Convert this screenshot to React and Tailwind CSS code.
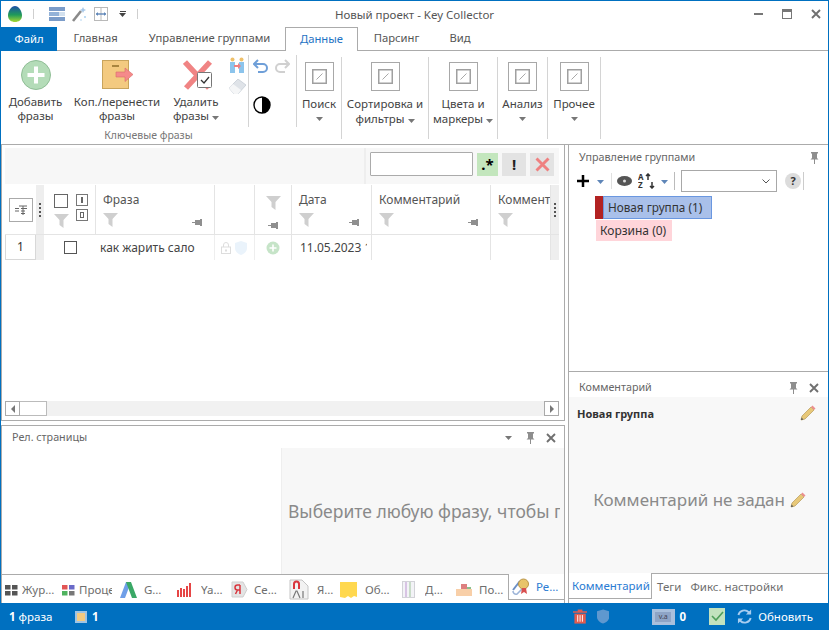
import React from "react";

const Pin = ({ className = "" }) => (
  <svg width="11" height="9" viewBox="0 0 11 9" className={className}>
    <path d="M0 4h3v1H0zM3 2h5v5H3zM8 1h2v7H8z" fill="#8f8f8f" />
  </svg>
);

const PinV = () => (
  <svg width="9" height="12" viewBox="0 0 9 12">
    <path d="M1 0h7v1.500H7V6l1.500 1.500H5V12H4V7.500H.5L2 6V1.500H1z" fill="#8e8e8e" />
  </svg>
);

const CloseX = ({ size = 10, color = "#707070" }) => (
  <svg width={size} height={size} viewBox="0 0 10 10">
    <path d="M1 1l8 8M9 1l-8 8" stroke={color} strokeWidth="1.900" />
  </svg>
);

const Funnel = ({ className = "" }) => (
  <svg width="15" height="14" viewBox="0 0 15 14" className={className}>
    <path d="M0 0h15L9.500 6v8l-4-3V6z" fill="#cfcfcf" />
  </svg>
);

const Caret = ({ color = "#777" }) => (
  <svg width="7" height="4" viewBox="0 0 7 4" className="inline-block">
    <path d="M0 0h7L3.500 4z" fill={color} />
  </svg>
);

const Pencil = () => (
  <svg width="16" height="16" viewBox="0 0 16 16">
    <path d="M1 15l1-4L11 2l3 3-9 9z" fill="#e8c878" stroke="#b5995a" strokeWidth="0.700" />
    <path d="M11 2l1.500-1.500 3 3L14 5z" fill="#ec8f8f" />
    <path d="M1 15l.6-2.400 1.800 1.800z" fill="#555" />
  </svg>
);

const Dots = () => (
  <div className="flex flex-col gap-[2px]">
    <span className="w-[2px] h-[2px] bg-[#555]" />
    <span className="w-[2px] h-[2px] bg-[#555]" />
    <span className="w-[2px] h-[2px] bg-[#555]" />
    <span className="w-[2px] h-[2px] bg-[#555]" />
  </div>
);

const Logo = () => (
  <svg width="14" height="16" viewBox="0 0 14 16">
    <defs>
      <linearGradient id="egg" x1="0" y1="0" x2="0" y2="1">
        <stop offset="0" stopColor="#1e4fa8" />
        <stop offset="0.550" stopColor="#1f9a5a" />
        <stop offset="1" stopColor="#a5d832" />
      </linearGradient>
    </defs>
    <path d="M7 0c3.500 0 7 5 7 9.500S10.500 16 7 16 0 14 0 9.500 3.500 0 7 0z" fill="url(#egg)" />
  </svg>
);

const QuickList = () => (
  <svg width="16" height="14" viewBox="0 0 16 14">
    <rect width="16" height="4" fill="#7b9cc9" />
    <rect y="5" width="16" height="4" fill="#93b2d8" />
    <rect y="10" width="16" height="4" fill="#7b9cc9" />
    <rect x="10" y="5" width="6" height="4" fill="#d2e0ee" />
  </svg>
);

const Wand = () => (
  <svg width="15" height="16" viewBox="0 0 15 16">
    <path d="M1 15L9 5" stroke="#8a8a8a" strokeWidth="2.600" />
    <path d="M11 1l1 2 2 1-2 1-1 2-1-2-2-1 2-1z" fill="#a8c8e8" />
    <circle cx="13" cy="11" r="1" fill="#a8d0f0" />
    <circle cx="9" cy="14" r="0.800" fill="#a8d0f0" />
  </svg>
);

const ColsIcon = () => (
  <svg width="14" height="14" viewBox="0 0 14 14">
    <rect x="0.500" y="0.500" width="13" height="13" fill="none" stroke="#b9b9b9" />
    <path d="M7 0.500v13" stroke="#b9b9b9" />
    <path d="M2 7h10" stroke="#5f86b8" strokeWidth="1.400" />
    <path d="M2 7l2-2v4zM12 7l-2-2v4z" fill="#5f86b8" />
  </svg>
);

const AddBig = () => (
  <svg width="30" height="30" viewBox="0 0 30 30">
    <circle cx="15" cy="15" r="14.500" fill="#b4dcb8" stroke="#8fbd95" />
    <path d="M15 6.500v17M6.500 15h17" stroke="#fff" strokeWidth="4" />
  </svg>
);

const MoveBig = () => (
  <svg width="31" height="30" viewBox="0 0 31 30">
    <rect x="0.500" y="0.500" width="26" height="28" fill="#f3ca80" stroke="#c8a45c" />
    <rect x="10" y="5" width="7" height="2" fill="#a8853f" />
    <path d="M14 12h9V8l8 6.500-8 7V17h-9z" fill="#f58a8a" stroke="#d96a6a" strokeWidth="0.600" />
  </svg>
);

const DeleteBig = () => (
  <svg width="30" height="30" viewBox="0 0 30 30" className="ml-[3px]">
    <path d="M2 2l24 26M27 2L3 28" stroke="#f08484" strokeWidth="5.500" />
    <rect x="14.500" y="12.500" width="14" height="15" rx="1" fill="#fff" stroke="#777" />
    <path d="M18 20l3 3 5-6" fill="none" stroke="#333" strokeWidth="1.300" />
  </svg>
);

const People = () => (
  <svg width="16" height="16" viewBox="0 0 16 16">
    <circle cx="3.500" cy="2.500" r="2" fill="#eec06a" />
    <circle cx="12.500" cy="2.500" r="2" fill="#eec06a" />
    <path d="M1 5h5v11H1zM10 5h5v11h-5z" fill="#8cc4ec" />
    <path d="M5 8h4V6l3 3-3 3v-2H5z" fill="#ef7f7f" />
  </svg>
);

const Eraser = () => (
  <svg width="17" height="15" viewBox="0 0 17 15">
    <path d="M0 9l9-9 8 6-8 9H5z" fill="#dfe3e8" stroke="#b8c2cc" strokeWidth="0.600" />
    <path d="M0 9l4-4 8 6-3 4H5z" fill="#f5f6f7" />
  </svg>
);

const Undo = ({ color, flip }) => (
  <svg width="16" height="14" viewBox="0 0 16 14" className={flip ? "-scale-x-100" : ""}>
    <path d="M5 1L1 5l4 4M1 5h9a4 4 0 0 1 0 8H5" fill="none" stroke={color} strokeWidth="2" />
  </svg>
);

const Contrast = () => (
  <svg width="18" height="18" viewBox="0 0 18 18">
    <circle cx="9" cy="9" r="8" fill="#fff" stroke="#000" strokeWidth="1.400" />
    <path d="M9 1a8 8 0 0 1 0 16z" fill="#000" />
  </svg>
);

const Placeholder = () => (
  <div className="w-[29px] h-[29px] border border-[#a8a8a8] flex items-center justify-center">
    <svg width="15" height="15" viewBox="0 0 15 15">
      <rect x="0.750" y="0.750" width="13.500" height="13.500" fill="#fff" stroke="#a0a0a0" strokeWidth="1.500" />
      <path d="M4.500 10.500l6-6" stroke="#a8a8a8" />
    </svg>
  </div>
);

const LargeButton = ({ width, icon, lines, caret }) => (
  <div className="flex flex-col items-center pt-[9px] leading-[14px]" style={{ width }}>
    <div className="h-[34px] flex items-start justify-center">{icon}</div>
    <span className="whitespace-nowrap mt-[1px]">{lines[0]}</span>
    <span className="whitespace-nowrap">
      {lines[1]}
      {caret && <span className="ml-[3px] align-middle"><Caret /></span>}
    </span>
  </div>
);

const DataGroup = ({ width, lines, caretBelow }) => (
  <div className="flex flex-col items-center border-r border-[#d4d4d4] h-[82px] mt-[6px] pt-[5px] leading-[15px]" style={{ width }}>
    <Placeholder />
    <span className="whitespace-nowrap mt-[5px]">{lines[0]}</span>
    {caretBelow ? (
      <span className="mt-[6px] h-[4px] flex"><Caret /></span>
    ) : (
      <span className="whitespace-nowrap">
        {lines[1]}
        <span className="ml-[3px] align-middle"><Caret /></span>
      </span>
    )}
  </div>
);

const HeaderCell = ({ width, title, pin }) => (
  <div className="shrink-0 border-r border-[#e4e4e4] flex flex-col pl-[7px] pr-[11px] pt-[6px] overflow-hidden text-[12px]" style={{ width }}>
    <span className="h-[22px] whitespace-nowrap text-[#555]">{title}</span>
    <div className="flex items-end justify-between">
      <Funnel />
      {pin && <Pin />}
    </div>
  </div>
);

const MiniBox = ({ mark }) => (
  <div className="w-[12px] h-[12px] border border-[#777] flex items-center justify-center">
    {mark === "i" ? <span className="w-[2px] h-[6px] bg-[#666]" /> : <span className="w-[4px] h-[6px] border border-[#666]" />}
  </div>
);

const TAB_ICONS = {
  log: (
    <svg width="13" height="12" viewBox="0 0 13 12">
      <path d="M0 1h5.500v4.500H0zM7 1h5.500v4.500H7zM0 7h5.500v4.500H0zM7 7h5.500v4.500H7z" fill="#555" />
    </svg>
  ),
  proc: (
    <svg width="13" height="12" viewBox="0 0 13 12">
      <path d="M0 1h5.500v4.500H0z" fill="#e25555" />
      <path d="M7 1h5.500v4.500H7z" fill="#6a6ac8" />
      <path d="M0 7h5.500v4.500H0z" fill="#4fb35f" />
      <path d="M7 7h5.500v4.500H7z" fill="#777" />
    </svg>
  ),
  google: (
    <svg width="17" height="16" viewBox="0 0 17 16">
      <path d="M6 0h5L5 16H0z" fill="#6f9fe8" />
      <path d="M6 0h5l6 16h-5z" fill="#3aa866" />
    </svg>
  ),
  ya: (
    <svg width="15" height="14" viewBox="0 0 15 14">
      <path d="M0 7h2v7H0zM3 5h2v9H3zM6 6h2v8H6zM9 3h2v11H9zM12 0h2v14h-2z" fill="#e64545" />
    </svg>
  ),
  se: (
    <svg width="17" height="17" viewBox="0 0 17 17">
      <path d="M1 1h11l4 7.500-4 7.500H1z" fill="#e4e4e4" stroke="#cfcfcf" />
      <path d="M9 4v9M9 4H6.500a2.500 2.500 0 0 0 0 5H9M6.500 9L4.500 13" fill="none" stroke="#d9363e" strokeWidth="1.500" />
    </svg>
  ),
  ad: (
    <svg width="20" height="21" viewBox="0 0 20 21">
      <path d="M1 1h12l6 6v13H1z" fill="#f2f2f2" stroke="#c4c4c4" />
      <path d="M5 10V5a2.500 2.500 0 0 1 5 0v5" fill="none" stroke="#d9363e" strokeWidth="2" />
      <path d="M4 19l3-7h1l3 7M14 12v7" fill="none" stroke="#777" strokeWidth="1.200" />
    </svg>
  ),
  ob: (
    <svg width="17" height="16" viewBox="0 0 17 16">
      <path d="M0 0h17v15l-3-1-3 2-3-2-3 2-5-1z" fill="#ffd84f" />
    </svg>
  ),
  d: (
    <svg width="13" height="17" viewBox="0 0 13 17">
      <rect x="0.500" y="0.500" width="12" height="16" fill="#f3f3f7" stroke="#d2d2d8" />
      <path d="M4 1v15" stroke="#d8c4e4" strokeWidth="2" />
      <path d="M8 1v15" stroke="#c8dcc8" strokeWidth="2" />
    </svg>
  ),
  po: (
    <svg width="16" height="12" viewBox="0 0 16 12">
      <path d="M0 5h16v7H0z" fill="#f8cfa8" />
      <path d="M5 0h6v5H5z" fill="#dd7f7f" />
      <path d="M11 3h4v2h-4z" fill="#8cbf8c" />
    </svg>
  ),
  rel: (
    <svg width="19" height="19" viewBox="0 0 19 19">
      <path d="M1 13l7-9" stroke="#6c8fc4" strokeWidth="2" />
      <path d="M1 14a3 3 0 0 0 4 3l7-7" fill="none" stroke="#9cb4d8" strokeWidth="1.500" />
      <circle cx="11.500" cy="7" r="5" fill="#e8c46a" stroke="#b9954a" />
      <path d="M10 11l-1 6 3-2 3 2-1-6z" fill="#d84f4f" />
    </svg>
  ),
};

const BOTTOM_TABS = [
  { w: 58, pl: 3, gap: 4, key: "log", text: "Жур…", tw: 34 },
  { w: 57, pl: 2, gap: 4, key: "proc", text: "Процессы", tw: 33 },
  { w: 57, pl: 3, gap: 7, key: "google", text: "G…", tw: 22 },
  { w: 54, pl: 3, gap: 9, key: "ya", text: "Ya…", tw: 24 },
  { w: 58, pl: 3, gap: 6, key: "se", text: "Се…", tw: 26 },
  { w: 52, pl: 3, gap: 8, key: "ad", text: "Я…", tw: 20 },
  { w: 60, pl: 2, gap: 8, key: "ob", text: "Об…", tw: 28 },
  { w: 54, pl: 4, gap: 10, key: "d", text: "Д…", tw: 20 },
  { w: 56, pl: 4, gap: 7, key: "po", text: "По…", tw: 27 },
];

const BottomTab = ({ tab }) => (
  <div className="flex items-center shrink-0 text-[#6e6e6e]" style={{ width: tab.w, paddingLeft: tab.pl, gap: tab.gap }}>
    {TAB_ICONS[tab.key]}
    <span className="overflow-hidden whitespace-nowrap" style={{ width: tab.tw }}>{tab.text}</span>
  </div>
);

export default function App() {
  return (
    <div className="w-[829px] h-[630px] overflow-hidden flex flex-col bg-white text-[11.5px] text-[#444] font-['Noto_Sans',sans-serif]">
      <div className="flex-1 min-h-0 flex flex-col border-x border-t border-[#0070c0]">
        {/* title bar */}
        <div className="h-[26px] shrink-0 grid grid-cols-[1fr_auto_1fr] items-center">
          <div className="flex items-center pl-[7px]">
            <Logo />
            <span className="ml-[11px] w-px h-[10px] bg-[#cfcfcf]" />
            <span className="ml-[15px]"><QuickList /></span>
            <span className="ml-[7px]"><Wand /></span>
            <span className="ml-[7px]"><ColsIcon /></span>
            <span className="ml-[11px] flex flex-col items-center gap-[1px]">
              <span className="w-[6px] h-px bg-[#444]" />
              <Caret color="#444" />
            </span>
            <span className="ml-[11px] w-px h-[10px] bg-[#cfcfcf]" />
          </div>
          <span className="text-[#555] whitespace-nowrap pt-[2px]">Новый проект - Key Collector</span>
          <div className="flex items-center justify-end pr-[7px] gap-[19px]">
            <span className="w-[9px] h-[2px] bg-[#777]" />
            <span className="w-[10px] h-[10px] border border-[#777] border-t-[3px]" />
            <CloseX />
          </div>
        </div>

        {/* ribbon tabs */}
        <div className="h-[24px] shrink-0 flex border-b border-[#ababab] text-[11.25px]">
          <div className="w-[56px] -mb-px bg-[#0070c0] text-white flex items-center justify-center">Файл</div>
          <div className="w-[77px] flex items-center justify-center text-[#555]">Главная</div>
          <div className="w-[151px] flex items-center justify-center text-[#555] whitespace-nowrap">Управление группами</div>
          <div className="w-[73px] -mb-px bg-white border-x border-t border-[#ababab] text-[#1f73c4] flex items-center justify-center">Данные</div>
          <div className="w-[77px] flex items-center justify-center text-[#555]">Парсинг</div>
          <div className="w-[50px] flex items-center justify-center text-[#555]">Вид</div>
        </div>

        {/* ribbon */}
        <div className="h-[94px] shrink-0 flex border-b border-[#ababab]">
          <div className="w-[247px] flex flex-col">
            <div className="flex h-[76px]">
              <div className="w-[2px]" />
              <LargeButton width={65} icon={<AddBig />} lines={["Добавить", "фразы"]} />
              <LargeButton width={98} icon={<MoveBig />} lines={["Коп./перенести", "фразы"]} />
              <LargeButton width={60} icon={<DeleteBig />} lines={["Удалить", "фразы"]} caret />
              <div className="flex flex-col items-center gap-[6px] pt-[6px] w-[22px]">
                <People />
                <Eraser />
              </div>
            </div>
            <span className="text-center text-[#777] text-[10.5px] leading-[14px] mt-[1px] pl-[48px]">Ключевые фразы</span>
          </div>
          <div className="w-[49px] h-[72px] mt-[4px] border-x border-[#d4d4d4] flex flex-col pl-[4px] pt-[4px]">
            <div className="flex gap-[5px] h-[14px]">
              <Undo color="#6f9fd8" />
              <Undo color="#d0d0d0" flip />
            </div>
            <div className="mt-[23px]"><Contrast /></div>
          </div>
          <DataGroup width={45} lines={["Поиск"]} caretBelow />
          <DataGroup width={87} lines={["Сортировка и", "фильтры"]} />
          <DataGroup width={69} lines={["Цвета и", "маркеры"]} />
          <DataGroup width={50} lines={["Анализ"]} caretBelow />
          <DataGroup width={53} lines={["Прочее"]} caretBelow />
        </div>

        {/* workspace */}
        <div className="flex-1 min-h-0 flex">
          <div className="w-[564px] shrink-0 flex flex-col">
            <div className="h-[276px] shrink-0 border-x border-b border-[#ababab] pl-[3px] pt-[3px] flex flex-col">
              <div className="h-[36px] w-[554px] shrink-0 bg-[#f7f7f7] flex justify-end items-start pr-[5px]">
                <span className="w-[2px] h-[36px] bg-[#eeeeee] mr-[4px]" />
                <span className="w-[103px] h-[24px] mt-[4px] bg-white border border-[#ababab] rounded-[1px]" />
                <span className="w-[21px] h-[23px] mt-[5px] ml-[4px] bg-[#c3e6bd] flex items-center justify-center font-bold text-[15px] text-black">.*</span>
                <span className="w-[24px] h-[23px] mt-[5px] ml-[4px] bg-[#e3e3e3] flex items-center justify-center font-bold text-[15px] text-[#222]">!</span>
                <span className="w-[24px] h-[23px] mt-[5px] ml-[4px] bg-[#e3e3e3] flex items-center justify-center">
                  <CloseX size={15} color="#ef8080" />
                </span>
              </div>

              {/* phrases table */}
              <div className="mt-px w-[554px] text-[12px]">
                <div className="h-[50px] flex border-b border-[#e4e4e4]">
                  <div className="w-[31px] shrink-0 flex items-center justify-center">
                    <div className="w-[24px] h-[24px] border border-[#aaa] flex items-center justify-center">
                      <svg width="12" height="10" viewBox="0 0 12 10">
                        <path d="M4 1h8M0 3.500h4M6 3.500h6M0 6h4M6 6h4M6 8.500h4M8 1v9" stroke="#666" />
                      </svg>
                    </div>
                  </div>
                  <div className="w-[8px] shrink-0 bg-[#eeeeee] flex items-center justify-center"><Dots /></div>
                  <div className="w-[52px] shrink-0 border-r border-[#e4e4e4] pl-[10px] pt-[9px] flex gap-[7px]">
                    <div className="flex flex-col gap-[6px]">
                      <span className="w-[14px] h-[14px] border border-[#666]" />
                      <Funnel />
                    </div>
                    <div className="flex flex-col gap-[3px]">
                      <MiniBox mark="i" />
                      <MiniBox mark="o" />
                    </div>
                  </div>
                  <HeaderCell width={119} title="Фраза" pin />
                  <div className="w-[40px] shrink-0 border-r border-[#e4e4e4]" />
                  <div className="w-[37px] shrink-0 border-r border-[#e4e4e4] flex flex-col items-center pt-[11px] gap-[11px]">
                    <Funnel />
                    <Pin />
                  </div>
                  <HeaderCell width={80} title="Дата" pin />
                  <HeaderCell width={119} title="Комментарий" pin />
                  <HeaderCell width={60} title="Комментарий" />
                  <div className="w-[8px] shrink-0 bg-[#eeeeee] flex items-center justify-center"><Dots /></div>
                </div>
                <div className="h-[25px] flex">
                  <div className="w-[31px] shrink-0 border-r border-b border-l border-[#d8d8d8] flex items-center justify-center text-[#333]">1</div>
                  <div className="w-[8px] shrink-0 bg-[#eeeeee]" />
                  <div className="w-[52px] shrink-0 flex items-center justify-center">
                    <span className="w-[13px] h-[13px] border border-[#555]" />
                  </div>
                  <div className="w-[119px] shrink-0 border-r border-[#eeeeee] pl-[4px] flex items-center text-[#444] whitespace-nowrap">как жарить сало</div>
                  <div className="w-[40px] shrink-0 border-r border-[#eeeeee] flex items-center pl-[6px] gap-[4px]">
                    <svg width="10" height="12" viewBox="0 0 10 12">
                      <path d="M2.500 5V3a2.500 2.500 0 0 1 5 0v2" fill="none" stroke="#ddd" />
                      <rect x="0.500" y="5" width="9" height="6.500" fill="#fff" stroke="#ddd" />
                      <rect x="4" y="7.500" width="2" height="2" fill="#ddd" />
                    </svg>
                    <svg width="12" height="14" viewBox="0 0 12 14">
                      <path d="M6 0l6 2v5c0 3.500-3 6-6 7-3-1-6-3.500-6-7V2z" fill="#eaf3fb" />
                    </svg>
                  </div>
                  <div className="w-[37px] shrink-0 border-r border-[#e4e4e4] flex items-center justify-center">
                    <svg width="14" height="14" viewBox="0 0 14 14">
                      <circle cx="7" cy="7" r="6.500" fill="#c6e4c8" />
                      <path d="M7 3.500v7M3.500 7h7" stroke="#fff" strokeWidth="1.600" />
                    </svg>
                  </div>
                  <div className="w-[80px] shrink-0 border-r border-[#e4e4e4] pl-[8px] pr-[4px] flex items-center">
                    <span className="overflow-hidden whitespace-nowrap text-[#444]">11.05.2023 14:20</span>
                  </div>
                  <div className="w-[119px] shrink-0 border-r border-[#e4e4e4]" />
                  <div className="w-[60px] shrink-0 border-r border-[#e4e4e4]" />
                  <div className="w-[8px] shrink-0 bg-[#eeeeee]" />
                </div>
              </div>

              {/* horizontal scrollbar */}
              <div className="mt-auto mb-[4px] w-[554px] h-[15px] bg-[#f1f1f1] flex justify-between">
                <div className="flex">
                  <div className="w-[15px] border border-[#aaa] bg-white flex items-center justify-center">
                    <span className="w-0 h-0 border-y-[4px] border-y-transparent border-r-[4px] border-r-[#777]" />
                  </div>
                  <div className="w-[27px] border border-l-0 border-[#bbb] bg-white" />
                </div>
                <div className="w-[15px] border border-[#aaa] bg-white flex items-center justify-center">
                  <span className="w-0 h-0 border-y-[4px] border-y-transparent border-l-[4px] border-l-[#777]" />
                </div>
              </div>
            </div>

            {/* related pages panel */}
            <div className="mt-[4px] flex-1 min-h-0 border-x border-t border-[#ababab] flex flex-col">
              <div className="h-[22px] shrink-0 flex items-center pl-[10px] pr-[8px] pt-[1px] text-[#666] text-[10.75px]">
                <span className="flex-1">Рел. страницы</span>
                <Caret color="#777" />
                <span className="ml-[14px]"><PinV /></span>
                <span className="ml-[11px]"><CloseX /></span>
              </div>
              <div className="h-[126px] shrink-0 flex">
                <div className="w-[280px] shrink-0 border-r border-[#eeeeee]" />
                <div className="flex-1 min-w-0 bg-[#f7f7f7] pl-[6px] pr-[4px] pt-[50px]">
                  <div className="overflow-hidden whitespace-nowrap text-[17.5px] leading-[26px] text-[#8a8a8a]">Выберите любую фразу, чтобы получить</div>
                </div>
              </div>
              <div className="flex-1 min-h-0 flex">
                <div className="flex border-t border-[#ababab] flex-1 pt-[1px]">
                  {BOTTOM_TABS.map((tab) => (
                    <BottomTab key={tab.key} tab={tab} />
                  ))}
                </div>
                <div className="w-[56px] shrink-0 h-[26px] border-l border-b border-[#ababab] flex items-center pl-[3px] gap-[5px] text-[#2b7cd3]">
                  {TAB_ICONS.rel}
                  <span>Ре…</span>
                </div>
              </div>
            </div>
          </div>

          {/* right column */}
          <div className="flex-1 min-w-0 ml-[3px] flex flex-col border-l border-[#ababab]">
            <div className="h-[227px] shrink-0 border-b border-[#ababab] flex flex-col">
              <div className="h-[24px] shrink-0 flex items-center pl-[10px] pr-[9px] justify-between text-[#666] pt-[1px] text-[10.75px]">
                <span>Управление группами</span>
                <PinV />
              </div>
              <div className="h-[24px] shrink-0 flex items-center pl-[8px]">
                <svg width="12" height="12" viewBox="0 0 12 12">
                  <path d="M6 0v12M0 6h12" stroke="#000" strokeWidth="2.500" />
                </svg>
                <span className="ml-[8px]"><Caret color="#5f86b8" /></span>
                <span className="ml-[7px] w-px h-[16px] bg-[#e0e0e0]" />
                <svg width="15" height="10" viewBox="0 0 15 10" className="ml-[5px]">
                  <ellipse cx="7.500" cy="5" rx="7.500" ry="5" fill="#555" />
                  <circle cx="7.500" cy="5" r="1.500" fill="#ddd" />
                </svg>
                <svg width="17" height="16" viewBox="0 0 17 16" className="ml-[6px]">
                  <text x="0" y="7" fontSize="8" fontWeight="700" fill="#333">A</text>
                  <text x="0" y="15" fontSize="8" fontWeight="700" fill="#333">Z</text>
                  <path d="M10 7V1M8 3l2-2 2 2M14 9v6M12 13l2 2 2-2" fill="none" stroke="#333" strokeWidth="1.500" />
                </svg>
                <span className="ml-[6px]"><Caret color="#5f86b8" /></span>
                <span className="ml-[6px] w-px h-[18px] bg-[#bbb]" />
                <div className="ml-[6px] w-[96px] h-[22px] border border-[#a8a8a8] flex items-center justify-end pr-[6px]">
                  <svg width="8" height="5" viewBox="0 0 8 5">
                    <path d="M0.500 0.500L4 4l3.500-3.500" fill="none" stroke="#555" />
                  </svg>
                </div>
                <div className="ml-[8px] w-[16px] h-[16px] rounded-full bg-[#dcdcdc] flex items-center justify-center text-[11px] font-bold text-[#333]">?</div>
                <span className="ml-[2px] w-px h-[18px] bg-[#ccc]" />
              </div>
              <div className="pl-[26px] pt-[3px] text-[12px]">
                <div className="flex h-[23px] w-[117px]">
                  <span className="w-[8px] bg-[#b22222]" />
                  <span className="flex-1 bg-[#a9c0ea] border border-[#6a97e0] pl-[4px] flex items-center whitespace-nowrap text-[11.75px] text-[#333]">Новая группа (1)</span>
                </div>
                <div className="mt-px ml-px w-[76px] h-[21px] bg-[#ffd5da] pl-[4px] flex items-center whitespace-nowrap text-[#333]">Корзина (0)</div>
              </div>
            </div>

            <div className="flex-1 min-h-0 flex flex-col">
              <div className="h-[25px] shrink-0 flex items-center pl-[10px] pr-[9px] pt-[6px] text-[#666] text-[10.75px]">
                <span className="flex-1">Комментарий</span>
                <PinV />
                <span className="ml-[11px]"><CloseX /></span>
              </div>
              <div className="h-[176px] shrink-0 bg-[#f8f8f8] flex flex-col pl-[8px] pr-[12px] pt-[8px]">
                <div className="flex justify-between items-start">
                  <span className="font-bold text-[11px] text-[#333] leading-[18px]">Новая группа</span>
                  <Pencil />
                </div>
                <div className="mt-[64px] ml-[6px] flex items-center justify-center gap-[5px] text-[17px] leading-[26px] text-[#8a8a8a] whitespace-nowrap">
                  Комментарий не задан
                  <Pencil />
                </div>
              </div>
              <div className="flex-1 min-h-0 flex">
                <div className="w-[83px] shrink-0 h-[26px] border-r border-b border-[#ababab] text-[#2b7cd3] flex items-center pl-[3px]">Комментарий</div>
                <div className="flex-1 border-t border-[#ababab] flex items-center text-[#6e6e6e] pl-[5px] gap-[9px] h-[26px]">
                  <span>Теги</span>
                  <span>Фикс. настройки</span>
                </div>
              </div>
            </div>
          </div>
        </div>
      </div>

      {/* status bar */}
      <div className="h-[27px] shrink-0 bg-[#0070c0] flex items-center text-white pl-[9px] pr-[16px]">
        <span className="whitespace-nowrap"><b className="font-bold">1</b> фраза</span>
        <span className="ml-[23px] w-[12px] h-[12px] bg-[#f3ca80] border-2 border-[#9fc4e4]" />
        <b className="ml-[5px] font-bold">1</b>
        <svg width="15" height="15" viewBox="0 0 15 15" className="ml-[474px]">
          <path d="M0 2h15v1.500H0zM5 0h5v2H5z" fill="#e25c4f" />
          <path d="M1.500 4.500h12V15h-12z" fill="#e25c4f" />
          <path d="M5 6v7M7.500 6v7M10 6v7" stroke="#fff" />
        </svg>
        <svg width="13" height="15" viewBox="0 0 13 15" className="ml-[10px]">
          <path d="M6.500 0l6.500 2v6c0 3.500-3.500 6-6.500 7C3.500 14 0 11.500 0 8V2z" fill="#5f98cf" />
        </svg>
        <div className="ml-[43px] w-[24px] h-[16px] bg-[#a9bfdc] flex items-center justify-center">
          <span className="w-[16px] h-[10px] bg-[#8ea4c6] text-[7px] leading-[10px] text-center text-[#445]">v.a</span>
        </div>
        <b className="ml-[5px] font-bold">0</b>
        <div className="ml-[23px] w-[17px] h-[17px] bg-[#c2e2be] flex items-center justify-center">
          <svg width="13" height="11" viewBox="0 0 13 11">
            <path d="M1 5l4 4 7-8" fill="none" stroke="#4f9e5a" strokeWidth="1.600" />
          </svg>
        </div>
        <svg width="16" height="15" viewBox="0 0 16 15" className="ml-[12px]">
          <path d="M1.500 6a6.500 6.500 0 0 1 11-3l1.500 1.500M14.500 9a6.500 6.500 0 0 1-11 3L2 10.500" fill="none" stroke="#a8cdf0" strokeWidth="2" />
          <path d="M15 0v5.500H9.500zM1 15V9.500h5.500z" fill="#a8cdf0" />
        </svg>
        <span className="ml-[6px]">Обновить</span>
      </div>
    </div>
  );
}
